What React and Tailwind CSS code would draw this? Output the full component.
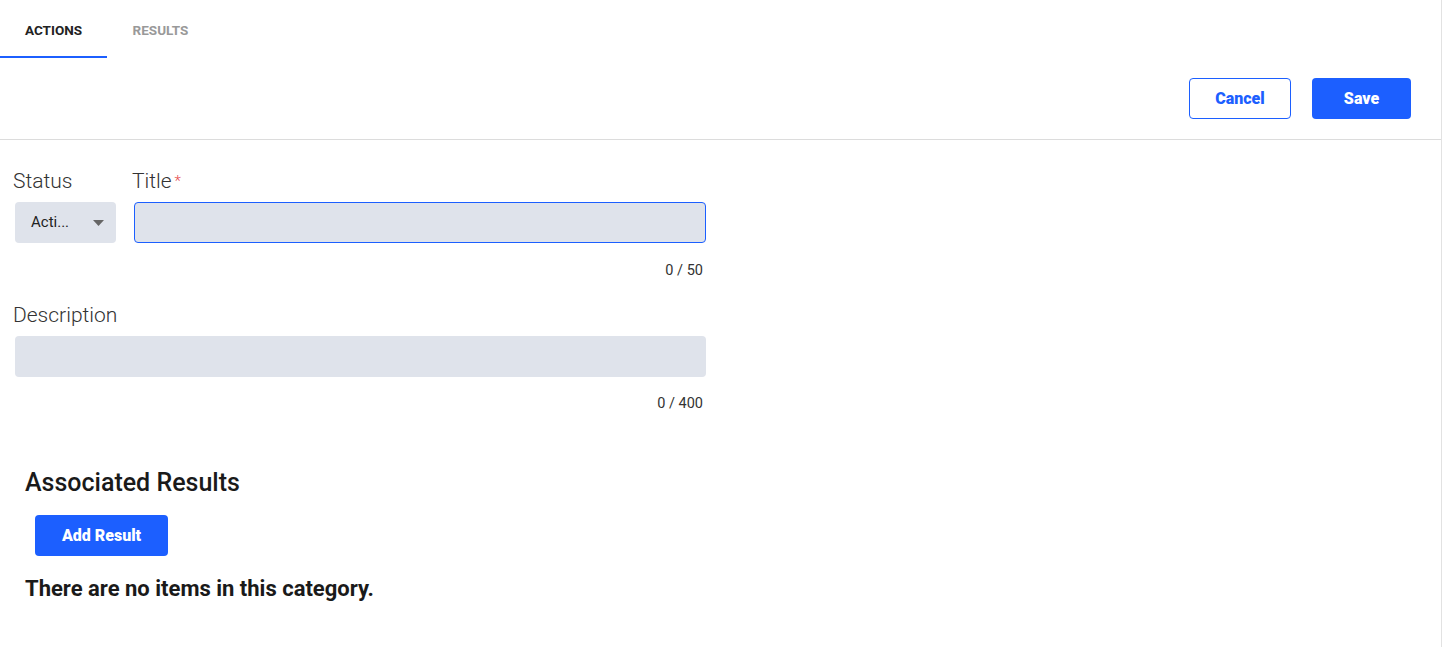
import { useState } from "react";

export default function App() {
  const [tab, setTab] = useState("actions");
  const [title, setTitle] = useState("");
  const [desc, setDesc] = useState("");

  return (
    <div className="min-h-[647px] w-[1443px] bg-white font-['Roboto',sans-serif] text-[#222]">
      <div className="mr-[1px] min-h-[647px] border-r border-[#e2e2e2]">
        <nav className="flex h-[58px]">
          <Tab active={tab === "actions"} onClick={() => setTab("actions")} className="w-[107px]">
            Actions
          </Tab>
          <Tab active={tab === "results"} onClick={() => setTab("results")} className="w-[107px]">
            Results
          </Tab>
        </nav>

        <div className="flex h-[82px] items-start justify-end gap-[21px] border-b border-[#dcdcdc] pr-[30px] pt-[20px]">
          <button className="h-[41px] w-[102px] rounded-[4px] border border-[#1c5fff] bg-white text-[16px] font-black text-[#1c5fff]">
            Cancel
          </button>
          <button className="h-[41px] w-[99px] rounded-[4px] bg-[#1c5fff] text-[16px] font-black text-white">
            Save
          </button>
        </div>

        <div className="w-[706px] pl-[13px] pt-[28px]">
          <div className="flex gap-[16px]">
            <div className="flex flex-col">
              <label className="text-[21px] font-light leading-[26px] text-[#333]">Status</label>
              <button className="ml-[2px] mt-[8px] flex h-[41px] w-[101px] items-center justify-between rounded-[4px] bg-[#dfe3eb] pl-[16px] pr-[12px] text-[15px] text-[#222]">
                <span>Acti...</span>
                <svg width="11" height="6" viewBox="0 0 11 6">
                  <path d="M0 0h11L5.5 6z" fill="#666" />
                </svg>
              </button>
            </div>
            <div className="flex flex-1 flex-col">
              <label className="text-[21px] font-light leading-[26px] text-[#333]">
                Title<span className="ml-[3px] align-top text-[15px] text-[#e5484d]">*</span>
              </label>
              <input
                value={title}
                onChange={(e) => setTitle(e.target.value)}
                maxLength={50}
                className="ml-[2px] mt-[8px] h-[41px] rounded-[4px] border border-[#1c5fff] bg-[#dfe3eb] px-3 text-[15px] outline-none"
              />
              <div className="mr-[3px] mt-[19px] text-right text-[14.5px] leading-[17px] text-[#333]">{title.length} / 50</div>
            </div>
          </div>

          <div className="mt-[22px] flex flex-col">
            <label className="text-[21px] font-light leading-[28px] text-[#333]">Description</label>
            <input
              value={desc}
              onChange={(e) => setDesc(e.target.value)}
              maxLength={400}
              className="ml-[2px] mt-[7px] h-[41px] rounded-[4px] bg-[#dfe3eb] px-3 text-[15px] outline-none"
            />
            <div className="mr-[3px] mt-[18px] text-right text-[14.5px] leading-[17px] text-[#333]">{desc.length} / 400</div>
          </div>
        </div>

        <section className="pl-[25px] pt-[55px]">
          <h2 className="text-[25px] font-medium leading-[32px] text-[#1a1a1a]">Associated Results</h2>
          <button className="ml-[10px] mt-[16px] h-[41px] w-[133px] rounded-[4px] bg-[#1c5fff] text-[16px] font-black text-white">
            Add Result
          </button>
          <p className="mt-[19px] text-[22px] font-bold leading-[28px] text-[#1a1a1a]">
            There are no items in this category.
          </p>
        </section>
      </div>
    </div>
  );
}

function Tab({ active, onClick, className, children }) {
  return (
    <button
      onClick={onClick}
      className={`flex h-full flex-col items-center justify-center border-b-2 pt-[5px] text-[13.5px] font-bold uppercase ${className} ${
        active ? "border-[#1c5fff] text-[#222]" : "border-transparent text-[#999]"
      }`}
    >
      <span>{children}</span>
    </button>
  );
}
